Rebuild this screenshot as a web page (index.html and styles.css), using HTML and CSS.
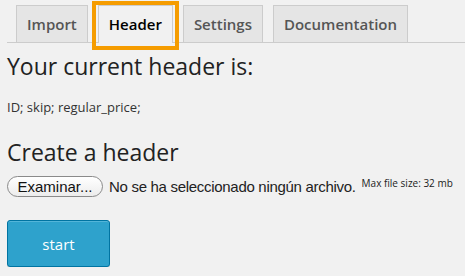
FILE: index.html
```html
<!DOCTYPE html>
<html lang="es">
<head>
  <meta charset="UTF-8">
  <title>Header</title>
  <link rel="stylesheet" href="styles.css">
</head>
<body>
  <div class="wrap">
    <h2 class="nav-tabs">
      <a class="nav-tab" href="#">Import</a>
      <a class="nav-tab nav-tab-active" href="#">Header<span class="highlight"></span></a>
      <a class="nav-tab" href="#">Settings</a>
      <a class="nav-tab" href="#">Documentation</a>
    </h2>

    <h3 class="title">Your current header is:</h3>
    <p class="current">ID; skip; regular_price;</p>

    <h3 class="title create">Create a header</h3>
    <div class="upload">
      <span class="file-btn">Examinar...</span>
      <span class="file-name">No se ha seleccionado ningún archivo.</span>
      <span class="max-size">Max file size: 32 mb</span>
    </div>

    <button class="button-primary">start</button>
  </div>
</body>
</html>
```

FILE: styles.css
```css
body {
  margin: 0;
  background: #f1f1f1;
  color: #222;
  font-family: "Open Sans", sans-serif;
}
.wrap {
  padding: 0 0 0 7px;
}
.nav-tabs {
  margin: 0;
  padding: 5px 0 0 9px;
  border-bottom: 1px solid #ccc;
  display: flex;
  gap: 10px;
  font-size: 15px;
  font-weight: 600;
  height: 37px;
  box-sizing: content-box;
}
.nav-tab {
  position: relative;
  display: block;
  padding: 0 10px;
  height: 36px;
  line-height: 36px;
  border: 1px solid #ccc;
  border-bottom: none;
  background: #e5e5e5;
  color: #555;
  text-decoration: none;
}
.nav-tab-active {
  background: #f1f1f1;
  color: #000;
  height: 37px;
  margin-bottom: -1px;
}
.highlight {
  position: absolute;
  left: -7px;
  top: -5px;
  right: -7px;
  bottom: -7px;
  border: 4px solid #f59c00;
}
.title {
  margin: 0;
  font-size: 23px;
  font-weight: 400;
  line-height: 30px;
}
.nav-tabs + .title {
  margin-top: 8px;
}
.current {
  margin: 17px 0 0;
  font-size: 13px;
  line-height: 18px;
  color: #333;
}
.create {
  margin-top: 21px;
}
.upload {
  display: flex;
  align-items: flex-start;
  margin-top: 9px;
  white-space: nowrap;
}
.file-btn {
  display: block;
  width: 94px;
  text-align: center;
  border: 1px solid #8a8a8a;
  border-radius: 11px;
  background: linear-gradient(#fff, #ececec);
  font-family: "Liberation Sans", Arial, sans-serif;
  font-size: 15px;
  line-height: 19px;
  color: #111;
}
.file-name {
  margin: 1px 0 0 6px;
  font-family: "Liberation Sans", Arial, sans-serif;
  font-size: 15px;
  letter-spacing: -0.3px;
  line-height: 19px;
  color: #222;
}
.max-size {
  margin: 1px 0 0 6px;
  font-size: 10px;
  line-height: 12px;
  color: #222;
}
.button-primary {
  display: block;
  margin-top: 23px;
  width: 103px;
  height: 47px;
  background: #2ea2cc;
  border: 1px solid #0074a2;
  border-radius: 3px;
  box-shadow: inset 0 1px 0 rgba(120, 200, 230, .5), 0 1px 0 rgba(0, 0, 0, .15);
  color: #fff;
  font-family: "Open Sans", sans-serif;
  font-size: 15px;
  cursor: pointer;
}
```
